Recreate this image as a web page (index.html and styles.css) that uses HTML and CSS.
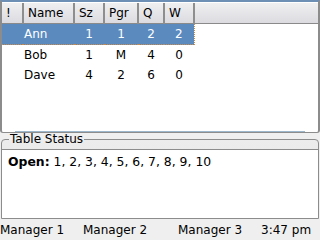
FILE: index.html
```html
<!DOCTYPE html>
<html lang="en">
<head>
    <meta charset="UTF-8">
    <meta name="viewport" content="width=device-width, initial-scale=1.0">
    <title>Table Manager</title>
    <link rel="stylesheet" href="styles.css">
</head>
<body>
    <div class="screen">
        <div class="table-panel">
            <table class="players">
                <colgroup>
                    <col class="c-flag">
                    <col class="c-name">
                    <col class="c-sz">
                    <col class="c-pgr">
                    <col class="c-q">
                    <col class="c-w">
                    <col>
                </colgroup>
                <thead>
                    <tr>
                        <th>!</th>
                        <th>Name</th>
                        <th>Sz</th>
                        <th>Pgr</th>
                        <th>Q</th>
                        <th>W</th>
                        <th class="filler"></th>
                    </tr>
                </thead>
                <tbody>
                    <tr class="selected">
                        <td></td><td class="name">Ann</td><td>1</td><td>1</td><td>2</td><td>2</td><td class="filler"></td>
                    </tr>
                    <tr>
                        <td></td><td class="name">Bob</td><td>1</td><td>M</td><td>4</td><td>0</td><td class="filler"></td>
                    </tr>
                    <tr>
                        <td></td><td class="name">Dave</td><td>4</td><td>2</td><td>6</td><td>0</td><td class="filler"></td>
                    </tr>
                </tbody>
            </table>
            <div class="scroll-hint"></div>
        </div>

        <fieldset class="status-group">
            <legend>Table Status</legend>
            <div class="status-body"><b>Open:</b> 1, 2, 3, 4, 5, 6, 7, 8, 9, 10</div>
        </fieldset>

        <div class="statusbar">
            <span class="slot s1">Manager 1</span>
            <span class="slot s2">Manager 2</span>
            <span class="slot s3">Manager 3</span>
            <span class="slot">3:47 pm</span>
        </div>
    </div>
</body>
</html>
```

FILE: styles.css
```css
body {
    margin: 0;
    font-family: "DejaVu Sans", sans-serif;
    font-size: 12px;
    color: #000;
    background-color: #efefef;
}
.screen {
    width: 320px;
    height: 240px;
    display: flex;
    flex-direction: column;
    overflow: hidden;
}
.table-panel {
    height: 129px;
    background-color: #fff;
    border-top: 2px solid #6d8fb6;
    border-left: 2px solid #8c8c8c;
    border-right: 2px solid #8c8c8c;
    border-bottom: 1px solid #8c8c8c;
    border-radius: 0 0 3px 3px;
    padding-top: 1px;
    display: flex;
    flex-direction: column;
}
.players {
    width: 100%;
    border-collapse: collapse;
    table-layout: fixed;
}
.c-flag { width: 21px; }
.c-name { width: 51px; }
.c-sz { width: 30px; }
.c-pgr { width: 34px; }
.c-q { width: 26px; }
.c-w { width: 30px; }
.players th {
    height: 20px;
    padding: 0 0 0 4px;
    text-align: left;
    font-weight: normal;
    background: linear-gradient(#efeff2, #dcdce0);
    border-right: 2px solid #8e8e8e;
    border-bottom: 1px solid #8a8a8a;
    white-space: nowrap;
}
.players th.filler {
    border-right: none;
}
.players td {
    height: 20px;
    padding: 0;
    text-align: center;
}
.players td.name {
    text-align: left;
    padding-left: 1px;
}
.players tr.selected td {
    background-color: #5b8abf;
    color: #fff;
    border-top: 1px dotted #c98a4c;
    border-bottom: 1px dotted #c98a4c;
}
.players tr.selected td:nth-child(6) {
    border-right: 1px dotted #c98a4c;
}
.players tr.selected td.filler {
    background-color: #fff;
    border: none;
}
.scroll-hint {
    margin: auto 13px 0 13px;
    height: 1px;
    background-color: #9cb6cc;
}
.status-group {
    margin: 0 1px;
    padding: 0;
    border: 1px solid #8c8c8c;
    border-radius: 4px 4px 0 0;
    background: linear-gradient(#ececec, #e2e2e2);
    flex: 1;
    display: flex;
    flex-direction: column;
    min-width: 0;
}
.status-group legend {
    margin-left: 7px;
    padding: 0 1px;
    line-height: 13px;
}
.status-body {
    flex: 1;
    margin-top: 3px;
    background-color: #fff;
    border-top: 1px solid #8c8c8c;
    padding: 4px 6px;
    font-size: 12.4px;
}
.statusbar {
    height: 21px;
    display: flex;
    align-items: center;
    background-color: #efefef;
    white-space: nowrap;
}
.slot.s1 { width: 83px; }
.slot.s2 { width: 95px; }
.slot.s3 { width: 83px; }
```
